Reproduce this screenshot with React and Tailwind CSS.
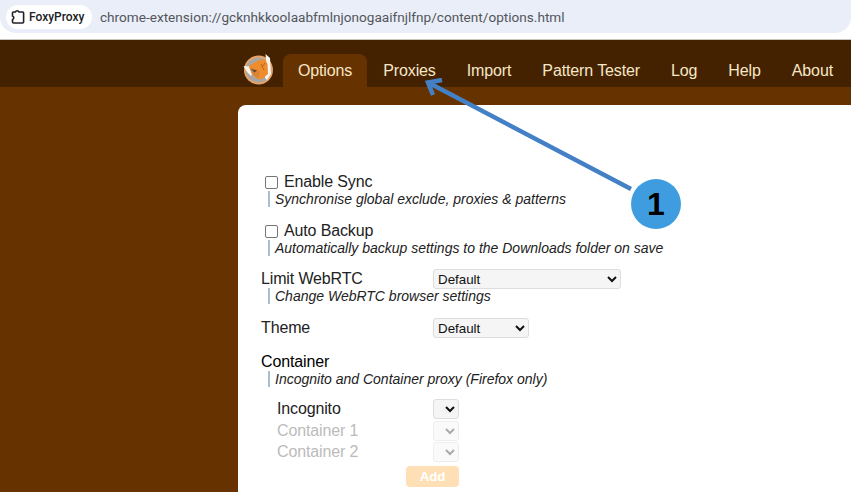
import React from "react";

const tabs = [
  ["Options", true],
  ["Proxies"],
  ["Import"],
  ["Pattern Tester"],
  ["Log"],
  ["Help"],
  ["About"],
];

function FoxLogo() {
  return (
    <svg width="34" height="34" viewBox="0 0 34 34" className="shrink-0">
      <circle cx="16.5" cy="18" r="14.5" fill="#e8a36a" />
      <circle cx="16.5" cy="18" r="12.6" fill="#a8a5a1" />
      <path d="M1.5 14 L8 14.5 L12 19 L9 24 L5 20 Z" fill="#f7f4ee" />
      <path d="M23.5 2 L28 6 L29 22 L25 28 L23 26 L24 9 Z" fill="#f7f4ee" />
      <path d="M7 14 L15 9 L23 7 L25.5 12 L26 22 L20 27 L15 27 L10 22 Z" fill="#ef8c2c" />
      <path d="M7 15 L14 17 L18 20 L16 26.5 L10 22 Z" fill="#d98538" />
      <path d="M9 17 L15 18.5 L12.5 20.5 Z" fill="#55493d" />
      <path d="M19 12 L22 18 M23 11 L21 14" stroke="#b5601a" strokeWidth="1" fill="none" />
    </svg>
  );
}

function ChipIcon() {
  return (
    <svg width="14" height="16" viewBox="0 0 14 16" className="shrink-0">
      <path
        d="M2.5 3 H4.4 A1.9 1.9 0 0 1 8 3 H11.6 A1 1 0 0 1 12.6 4 V13 A1 1 0 0 1 11.6 14 H2.5 A1 1 0 0 1 1.5 13 V10.6 A1.9 1.9 0 0 0 1.5 7 V4 A1 1 0 0 1 2.5 3 Z"
        fill="none"
        stroke="#202124"
        strokeWidth="1.6"
      />
    </svg>
  );
}

function Desc({ children, className = "" }) {
  return (
    <p className={`ml-[7px] border-l-2 border-[#a9bdd4] pl-[5px] text-[14px] leading-[16px] tracking-normal italic text-[#222] ${className}`}>
      {children}
    </p>
  );
}

function CheckRow({ label, className = "" }) {
  return (
    <label className={`flex h-[18px] items-center pl-1 text-base leading-[18px] text-[#222] ${className}`}>
      <input type="checkbox" className="m-0 mr-[6px] h-[13px] w-[13px] appearance-none rounded-[2px] border border-[#767676] bg-white" />
      {label}
    </label>
  );
}

function Select({ className = "", children, disabled }) {
  return (
    <select
      disabled={disabled}
      className={`h-[20px] rounded-[3px] border pl-0 text-[13.33px] leading-[16px] tracking-normal ${disabled ? "border-[#eee] bg-[#fafafa] text-[#aaa]" : "border-[#ddd] bg-[#f5f5f5] text-[#111]"} ${className}`}
    >
      {children}
    </select>
  );
}

export default function App() {
  return (
    <div className="relative flex h-[492px] w-[851px] flex-col overflow-hidden bg-[#663300] font-['Liberation_Sans',Arial,sans-serif]">
      {/* browser address bar */}
      <div className="h-[40px] shrink-0 border-b border-[#c9c4bd] bg-white">
        <div className="flex h-[33px] items-center rounded-b-[16px] bg-[#e9eef8] pl-[6px]">
          <div className="flex h-[24px] w-[86px] items-center gap-[4px] rounded-full bg-white pl-[5px] font-['Roboto',sans-serif] text-[12px] font-medium text-[#202124]">
            <ChipIcon />
            <span>FoxyProxy</span>
          </div>
          <span className="mt-[2px] ml-[8px] font-['Roboto',sans-serif] text-[13.6px] text-[#53565b]">
            chrome-extension://gcknhkkoolaabfmlnjonogaaifnjlfnp/content/options.html
          </span>
        </div>
      </div>

      {/* nav */}
      <nav className="flex h-[47px] shrink-0 items-end justify-end gap-px bg-[#442200] pr-[3px] text-base tracking-[-0.12px] text-[#f6e7c9]">
        <div className="mr-[6px] self-end pb-[1px]">
          <FoxLogo />
        </div>
        {tabs.map(([t, active]) => (
          <a
            key={t}
            className={`flex h-[33px] items-center rounded-t-[8px] px-[15px] ${active ? "bg-[#663300]" : ""}`}
          >
            {t}
          </a>
        ))}
      </nav>

      {/* panel */}
      <div className="mt-[18px] ml-[238px] flex-1 rounded-tl-[8px] bg-white pt-[68px] pl-[23px] text-base tracking-[-0.14px] text-[#222]">
        <CheckRow label="Enable Sync" />
        <Desc>Synchronise global exclude, proxies &amp; patterns</Desc>

        <CheckRow label="Auto Backup" className="mt-[15px]" />
        <Desc>Automatically backup settings to the Downloads folder on save</Desc>

        <div className="mt-[13px] flex h-[20px] items-center">
          <span className="w-[172px]">Limit WebRTC</span>
          <Select className="w-[188px]"><option>Default</option></Select>
        </div>
        <Desc className="-mt-px">Change WebRTC browser settings</Desc>

        <div className="mt-[14px] flex h-[20px] items-center">
          <span className="w-[172px]">Theme</span>
          <Select className="w-[96px]"><option>Default</option></Select>
        </div>

        <div className="mt-[15px] h-[18px] leading-[18px] text-black">Container</div>
        <Desc>Incognito and Container proxy (Firefox only)</Desc>

        <div className="mt-[12px] flex h-[20px] items-center">
          <span className="w-[172px] pl-[16px]">Incognito</span>
          <Select className="w-[26px]" />
        </div>
        <div className="mt-[2px] flex h-[20px] items-center text-[#bbb]">
          <span className="w-[172px] pl-[16px]">Container 1</span>
          <Select className="w-[26px]" disabled />
        </div>
        <div className="mt-[1px] flex h-[20px] items-center text-[#bbb]">
          <span className="w-[172px] pl-[16px]">Container 2</span>
          <Select className="w-[26px]" disabled />
        </div>
        <button className="mt-[4px] ml-[145px] block h-[21px] w-[53px] rounded-[4px] bg-[#ffdfb5] text-[13.33px] font-bold text-white">
          Add
        </button>
      </div>

      {/* annotation */}
      <svg className="pointer-events-none absolute top-[78px] left-[420px]" width="270" height="160" viewBox="0 0 270 160">
        <path d="M211 111 L11 6" stroke="#4480c6" strokeWidth="4.5" fill="none" />
        <path d="M22 2 L8 4.5 L13 17" stroke="#4480c6" strokeWidth="4.5" fill="none" />
      </svg>
      <div className="absolute top-[179px] left-[631px] flex h-[50px] w-[50px] items-center justify-center rounded-full bg-[#3f9ddf] text-[32px] font-bold text-black">
        1
      </div>
    </div>
  );
}
